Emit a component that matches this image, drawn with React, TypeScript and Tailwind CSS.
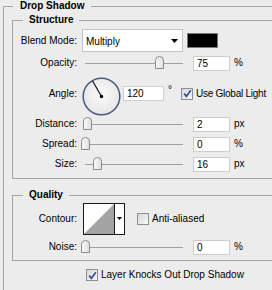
import React from "react";

const LINE = "border-[#a6a6a6]";

function Label({ children }: { children: React.ReactNode }) {
  return <div className="w-[64px] shrink-0 text-right leading-[12px]">{children}</div>;
}

function Field({ value, w = 37 }: { value: string; w?: number }) {
  return (
    <div
      className="h-[15px] shrink-0 border border-[#cdcdcd] bg-white pl-[3px] leading-[13px]"
      style={{ width: w }}
    >
      {value}
    </div>
  );
}

function Checkbox({ checked }: { checked?: boolean }) {
  return (
    <span className="flex h-[12px] w-[12px] shrink-0 items-center justify-center border border-[#8f8f8f] bg-linear-to-br from-[#d8d8d8] to-[#f8f8f8]">
      {checked && (
        <svg width="9" height="9" viewBox="0 0 9 9">
          <path d="M1.2 4.6 L3.4 7.4 L7.8 1.2" stroke="#2f4fa6" strokeWidth="1.7" fill="none" />
        </svg>
      )}
    </span>
  );
}

function Slider({ at }: { at: number }) {
  return (
    <div className="relative ml-[5px] flex h-[16px] w-[104px] shrink-0 items-center px-[3px]">
      <div className="h-px w-full bg-[#a0a0a0]" />
      <svg
        className="absolute top-[1px]"
        style={{ left: 3 + at - 4.5 }}
        width="9"
        height="13"
        viewBox="0 0 9 13"
      >
        <defs>
          <linearGradient id="th" x1="0" y1="0" x2="1" y2="0">
            <stop offset="0" stopColor="#fbfbfb" />
            <stop offset="1" stopColor="#dedede" />
          </linearGradient>
        </defs>
        <path d="M0.5 12.5 V4.2 Q0.5 0.5 4.5 0.5 Q8.5 0.5 8.5 4.2 V12.5 Z" fill="url(#th)" stroke="#8a8a8a" />
      </svg>
    </div>
  );
}

function SliderRow({ label, at, value, unit, className = "" }: { label: string; at: number; value: string; unit: string; className?: string }) {
  return (
    <div className={`flex h-[16px] items-center ${className}`}>
      <Label>{label}</Label>
      <Slider at={at} />
      <div className="ml-[7px]">
        <Field value={value} />
      </div>
      <span className="ml-[4px] leading-[12px]">{unit}</span>
    </div>
  );
}

function Dial() {
  return (
    <svg className="ml-[5px] mt-[6px] shrink-0" width="39" height="39" viewBox="0 0 39 39">
      <defs>
        <radialGradient id="dg" cx="50%" cy="45%" r="60%">
          <stop offset="0" stopColor="#fbfbfb" />
          <stop offset="1" stopColor="#e4e4e4" />
        </radialGradient>
      </defs>
      <circle cx="19.5" cy="19.5" r="18.3" fill="url(#dg)" stroke="#47597c" strokeWidth="1.5" />
      <line x1="19.5" y1="19.5" x2="10.6" y2="4" stroke="#000" strokeWidth="1.1" />
      <circle cx="19.5" cy="19.5" r="1.7" fill="#000" />
    </svg>
  );
}

export default function App() {
  return (
    <div className="h-[290px] w-[272px] overflow-hidden bg-[#ececec] font-['Liberation_Sans',Arial,sans-serif] text-[10px] text-black">
      <fieldset className={`ml-[3px] border-l border-t ${LINE} pb-4`}>
        <legend className="ml-[9px] px-[7px] font-bold leading-[12px]">Drop Shadow</legend>

        <fieldset className={`ml-[8px] mt-[2px] border-b border-l border-t ${LINE} pb-[6px]`}>
          <legend className="ml-[10px] px-[6px] font-bold leading-[12px]">Structure</legend>

          <div className="mt-[3px] flex h-[23px] items-center">
            <Label>Blend Mode:</Label>
            <div className="ml-[5px] flex h-[23px] w-[101px] items-center justify-between border border-[#c4c4c4] bg-white pl-[3px] pr-[4px]">
              <span className="mt-[2px] leading-[12px]">Multiply</span>
              <svg width="7" height="4" viewBox="0 0 7 4">
                <path d="M0 0 H7 L3.5 4 Z" fill="#000" />
              </svg>
            </div>
            <div className="ml-[4px] h-[15px] w-[31px] border border-[#7a7a7a] bg-black" />
          </div>

          <SliderRow label="Opacity:" at={74.5} value="75" unit="%" className="mt-[3px]" />

          <div className="flex h-[45px] items-center">
            <Label>Angle:</Label>
            <Dial />
            <div className="ml-[2px]">
              <Field value="120" w={41} />
            </div>
            <span className="ml-[4px] self-center pb-[8px] leading-[12px]">°</span>
            <span className="ml-[9px]">
              <Checkbox checked />
            </span>
            <span className="ml-[3px] whitespace-nowrap leading-[12px] tracking-[-0.25px]">Use Global Light</span>
          </div>

          <SliderRow label="Distance:" at={2.5} value="2" unit="px" />
          <SliderRow label="Spread:" at={0.7} value="0" unit="%" className="mt-[4px]" />
          <SliderRow label="Size:" at={12} value="16" unit="px" className="mt-[4px]" />
        </fieldset>

        <fieldset className={`ml-[8px] mt-[10px] border-b border-l border-t ${LINE} pb-[5px]`}>
          <legend className="ml-[10px] px-[6px] font-bold leading-[12px]">Quality</legend>

          <div className="mt-[2px] flex h-[32px] items-center">
            <Label>Contour:</Label>
            <div className="ml-[6px] flex h-[32px] w-[42px] border border-[#1a1a1a] bg-white">
              <svg width="30" height="30" viewBox="0 0 30 30" className="shrink-0">
                <path d="M0 30 L30 0 V30 Z" fill="#a3a3a3" />
              </svg>
              <div className="flex flex-1 items-center justify-center border-l border-[#1a1a1a] pb-[2px]">
                <svg width="5" height="3" viewBox="0 0 5 3">
                  <path d="M0 0 H5 L2.5 3 Z" fill="#000" />
                </svg>
              </div>
            </div>
            <span className="ml-[12px]">
              <Checkbox />
            </span>
            <span className="ml-[3px] leading-[12px]">Anti-aliased</span>
          </div>

          <SliderRow label="Noise:" at={0.7} value="0" unit="%" className="mt-[4px]" />
        </fieldset>

        <div className="ml-[82px] mt-[8px] flex h-[12px] items-center">
          <Checkbox checked />
          <span className="ml-[3px] leading-[12px]">Layer Knocks Out Drop Shadow</span>
        </div>
      </fieldset>
    </div>
  );
}
